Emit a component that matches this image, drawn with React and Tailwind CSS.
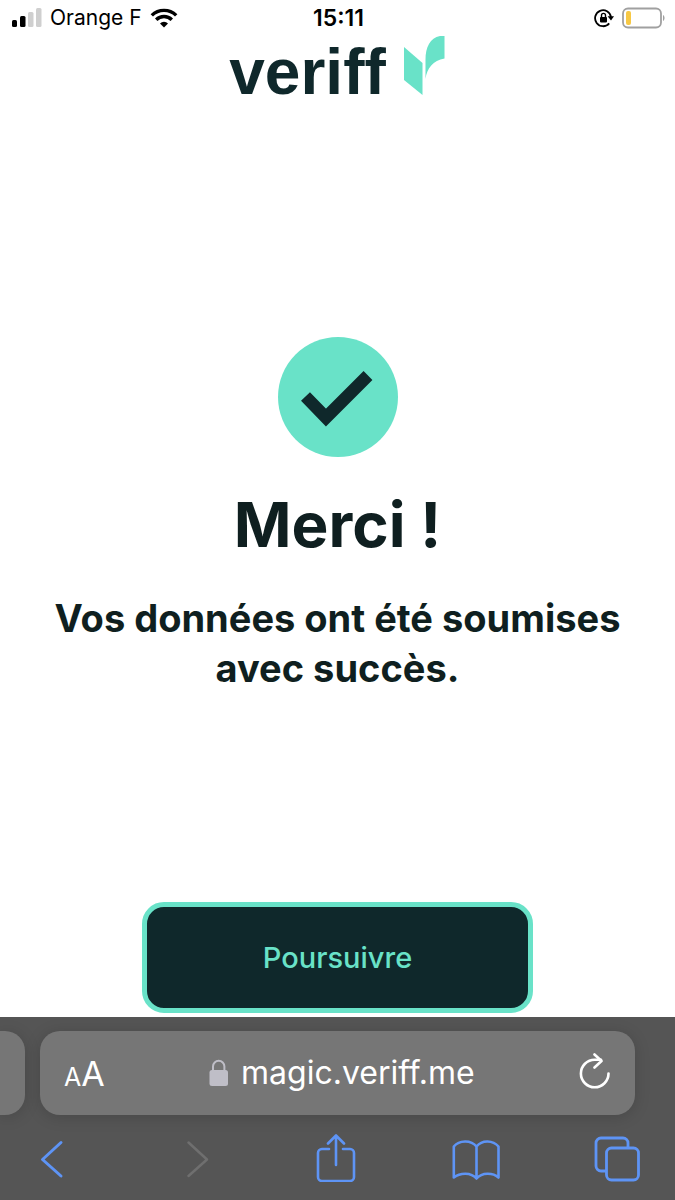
import React from 'react';

const StatusBar = () => {
    return (
        <div className="grid h-9 grid-cols-[1fr_auto_1fr] items-center pl-3 pr-2.5 text-black">
            <div className="flex items-center">
                <svg className="h-5 w-[30px]" viewBox="0 0 30 20" aria-label="Réseau">
                    <rect x="0" y="12" width="5" height="7" rx="1.5" fill="#000" />
                    <rect x="8" y="8" width="5.5" height="11" rx="1.5" fill="#000" />
                    <rect x="16" y="4" width="5.5" height="15" rx="1.5" fill="#cfcfcf" />
                    <rect x="24" y="0" width="5.5" height="19" rx="1.5" fill="#cfcfcf" />
                </svg>
                <span className="ml-2 text-[21px] leading-6">Orange F</span>
                <svg className="ml-2 h-5 w-7" viewBox="0 0 28 20" fill="none" stroke="#000" strokeWidth="3.4" aria-label="Wi-Fi">
                    <path d="M1.8 7.4a17.4 17.4 0 0 1 24.4 0" />
                    <path d="M6.2 11.8a11 11 0 0 1 15.6 0" />
                    <path d="M14 19.4l-4-4a5.7 5.7 0 0 1 8 0z" fill="#000" stroke="none" />
                </svg>
            </div>
            <span className="text-[23px] font-semibold leading-6">15:11</span>
            <div className="flex items-center justify-end gap-2">
                <svg className="h-5 w-5" viewBox="0 0 20 20" aria-label="Rotation verrouillée">
                    <path d="M15.2 15.4A8 8 0 1 1 17 9" fill="none" stroke="#000" strokeWidth="1.8" />
                    <path d="M13.6 8.2h6.4l-3 4.4z" fill="#000" />
                    <rect x="6" y="9" width="7" height="5.4" rx="0.8" fill="#000" />
                    <path d="M7.5 9V7.4a2 2 0 0 1 4 0V9" fill="none" stroke="#000" strokeWidth="1.4" />
                </svg>
                <svg className="h-6 w-[43px]" viewBox="0 0 43 24" aria-label="Batterie faible">
                    <rect x="1" y="2.5" width="38" height="19" rx="5" fill="none" stroke="#a0a0a0" strokeWidth="1.8" />
                    <rect x="4" y="5" width="5" height="14" rx="2" fill="#f7c844" />
                    <path d="M41 9c2 .8 2 5.2 0 6z" fill="#a0a0a0" />
                </svg>
            </div>
        </div>
    );
};

const Logo = () => {
    return (
        <div className="flex h-16 items-start justify-center gap-4">
            <span className="font-['Liberation_Sans',sans-serif] text-[64px] font-bold leading-[72px] text-[#0f282b]">veriff</span>
            <svg className="h-[60px] w-[44px]" viewBox="0 0 44 60" fill="#69e2c8" aria-hidden="true">
                <path d="M2 11L20.5 27V59L2 44z" />
                <path d="M42.500 0H38C28 2 23.500 11 23.500 24V43C25 32 31 24.500 42.500 22.500z" />
            </svg>
        </div>
    );
};

const CheckBadge = () => {
    return (
        <svg className="size-[120px]" viewBox="0 0 120 120" aria-hidden="true">
            <circle cx="60" cy="60" r="60" fill="#69e2c8" />
            <path d="M27.5 59.5L48 80.5L90 38.5" fill="none" stroke="#0f282b" strokeWidth="12.5" />
        </svg>
    );
};

const AddressBar = () => {
    return (
        <div className="flex gap-[15px] pr-10">
            <div className="h-[84px] w-[25px] rounded-r-[20px] bg-[#767676] shadow-[0_2px_16px_rgba(0,0,0,0.16)]" />
            <div className="flex h-[84px] flex-1 items-center justify-between rounded-[20px] bg-[#767676] px-6 text-white shadow-[0_2px_16px_rgba(0,0,0,0.16)]">
                <button type="button" className="flex items-baseline pt-1" aria-label="Taille du texte">
                    <span className="text-[25px] leading-10">A</span>
                    <span className="text-[34px] leading-10">A</span>
                </button>
                <button type="button" className="flex items-center gap-3">
                    <svg className="h-7 w-5" viewBox="0 0 20 28" aria-hidden="true">
                        <rect x="0.5" y="11" width="18.5" height="16" rx="2.5" fill="#bfbec7" />
                        <path d="M4 12V7.5a5.7 5.7 0 0 1 11.4 0V12" fill="none" stroke="#bfbec7" strokeWidth="2" />
                    </svg>
                    <span className="text-[32px] leading-10">magic.veriff.me</span>
                </button>
                <button type="button" aria-label="Recharger">
                    <svg className="h-10 w-8" viewBox="0 0 32 40" fill="none" stroke="#fff" strokeWidth="2.6" strokeLinecap="round" strokeLinejoin="round">
                        <path d="M29.5 20.5A13.8 13.8 0 1 1 15.7 6.700H22" />
                        <path d="M15.5 1.500L22.5 8L15.5 14.500" />
                    </svg>
                </button>
            </div>
        </div>
    );
};

const Toolbar = () => {
    const icon = 'h-12 w-12';

    return (
        <nav className="mt-[19px] flex justify-between pb-[18px] pl-7 pr-[34px]">
            <button type="button" aria-label="Précédent">
                <svg className={icon} viewBox="0 0 48 48" fill="none" stroke="#5e94f5" strokeWidth="3" strokeLinecap="round" strokeLinejoin="round">
                    <path d="M33 8.5L14.5 25.5L33 42" />
                </svg>
            </button>
            <button type="button" aria-label="Suivant" disabled>
                <svg className={icon} viewBox="0 0 48 48" fill="none" stroke="#6f6f6f" strokeWidth="2.5" strokeLinecap="round" strokeLinejoin="round">
                    <path d="M19.5 8.5L38 25.5L19.5 42" />
                </svg>
            </button>
            <button type="button" aria-label="Partager">
                <svg className={icon} viewBox="0 0 48 48" fill="none" stroke="#5e94f5" strokeWidth="2.6" strokeLinecap="round" strokeLinejoin="round">
                    <path d="M18 15H11a4 4 0 0 0-4 4v24a4 4 0 0 0 4 4h28a4 4 0 0 0 4-4V19a4 4 0 0 0-4-4H32" />
                    <path d="M25 31V2M17 9.5L25 1.5L33 9.5" />
                </svg>
            </button>
            <button type="button" aria-label="Signets">
                <svg className={icon} viewBox="0 0 48 48" fill="none" stroke="#5e94f5" strokeWidth="2.6" strokeLinecap="round" strokeLinejoin="round">
                    <path d="M24.5 12.5C19 5.5 7 6 1.8 12.5V43.5C8 38.5 19 38 24.5 44.5C30 38 41 38.5 46.5 43.5V12.5C41 6 30 5.5 24.5 12.5zV44" />
                </svg>
            </button>
            <button type="button" aria-label="Onglets">
                <svg className={icon} viewBox="0 0 48 48" fill="none" stroke="#5e94f5" strokeWidth="2.8">
                    <path d="M13 37H8a5 5 0 0 1-5-5V9a5 5 0 0 1 5-5h22a5 5 0 0 1 5 5v5" />
                    <rect x="13.5" y="14" width="32" height="32" rx="5" />
                </svg>
            </button>
        </nav>
    );
};

const App = () => {
    return (
        <div className="flex min-h-screen flex-col bg-white font-[Inter,sans-serif]">
            <StatusBar />
            <Logo />
            <main className="flex flex-1 flex-col items-center justify-between pb-1">
                <div className="flex flex-col items-center px-10 pt-[237px] text-center text-[#0f1f20]">
                    <CheckBadge />
                    <h1 className="mt-7 text-[62px] font-bold leading-20">Merci !</h1>
                    <p className="mt-7 text-[38px] font-bold leading-[50px]">
                        Vos données ont été soumises avec succès.
                    </p>
                </div>
                <button
                    type="button"
                    className="h-[111px] w-[391px] rounded-[22px] border-[5px] border-[#69e2c8] bg-[#0f282b] text-[29px] font-medium text-[#69e2c8]"
                >
                    Poursuivre
                </button>
            </main>
            <footer className="bg-[#555555] pt-3.5">
                <AddressBar />
                <Toolbar />
            </footer>
        </div>
    );
};

export default App;
